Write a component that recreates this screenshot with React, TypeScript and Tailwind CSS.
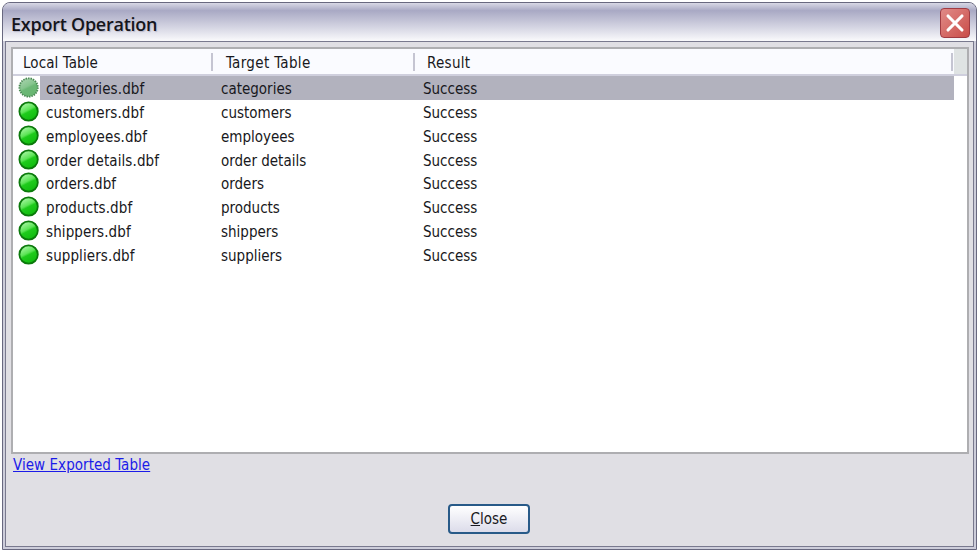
const names = ['categories', 'customers', 'employees', 'order details', 'orders', 'products', 'shippers', 'suppliers'];

function StatusIcon({ selected }: { selected: boolean }) {
  const id = selected ? 'ball-selected' : 'ball';
  return (
    <svg className="h-[22px] w-[22px] shrink-0" viewBox="0 0 22 22">
      <defs>
        <linearGradient id={id} x1="0.25" y1="0.1" x2="0.65" y2="0.9">
          <stop offset="0" stopColor={selected ? '#a0cfa6' : '#a0f59c'} />
          <stop offset="0.42" stopColor={selected ? '#86c58e' : '#5ce456'} />
          <stop offset="0.55" stopColor={selected ? '#6cb876' : '#1fcb1c'} />
          <stop offset="1" stopColor={selected ? '#68b672' : '#12bd10'} />
        </linearGradient>
      </defs>
      <circle cx="10.6" cy="10.5" r="9.2" fill={`url(#${id})`} stroke={selected ? '#4b8a55' : '#0b7a0b'} strokeWidth="1.8" strokeDasharray={selected ? '1.5 1' : undefined} />
    </svg>
  );
}

export default function App() {
  return (
    <div className="h-[552px] w-[979px] bg-white pt-[2px] pl-[2px] font-['DejaVu_Sans_Condensed','DejaVu_Sans',sans-serif] text-[15px] text-[#181820] [font-stretch:condensed]">
      <div className="flex h-[548px] w-[975px] flex-col overflow-hidden rounded-t-[8px] border border-[#68687f] bg-[#cdcdda]">
        <header className="flex h-[38px] shrink-0 items-center justify-between bg-linear-to-b from-[#d8d8e5] via-[#a9a9c4] via-20% to-[#fafafc] pr-[6px] pl-[8px]">
          <h1 className="pt-[3px] font-['Open_Sans',sans-serif] text-[18px] leading-[24px] font-semibold tracking-[-0.25px] text-[#15151c] [font-stretch:normal] [text-shadow:1px_1px_1px_#b8b8ca]">Export Operation</h1>
          <button className="mt-px flex h-[30px] w-[30px] items-center justify-center rounded-[4px] border border-[#a03b42] bg-linear-to-br from-[#e08a88] to-[#c94c49]">
            <svg className="h-[20px] w-[20px]" viewBox="0 0 20 20" stroke="#fff" strokeWidth="3.1" strokeLinecap="round">
              <path d="M3 3 17 17M17 3 3 17" />
            </svg>
          </button>
        </header>
        <main className="mx-[2px] mb-[2px] flex flex-1 flex-col border border-[#79798e] bg-[#e0dfe4] px-[5px] pt-[5px]">
          <section className="h-[407px] w-[958px] border-2 border-[#aeaeb1] bg-white">
            <div className="flex h-[27px] border-b-2 border-[#cfcfdd] bg-[#fafbff] leading-[28px]">
              <div className="flex w-[200px] items-start justify-between pl-[10px]"><span className="tracking-[0.1px]">Local Table</span><i className="mt-[4px] h-[18px] w-[2px] bg-[#c5c5d2]" /></div>
              <div className="flex w-[202px] items-start justify-between pl-[13px]"><span className="tracking-[0.35px]">Target Table</span><i className="mt-[4px] h-[18px] w-[2px] bg-[#c5c5d2]" /></div>
              <div className="flex flex-1 items-start justify-between pl-[12px]"><span className="tracking-[0.3px]">Result</span><i className="mt-[4px] mr-px h-[18px] w-[2px] bg-[#c5c5d2]" /></div>
              <div className="w-[13px] bg-[#dfe3e3]" />
            </div>
            {names.map((name, i) => (
              <div key={name} className="flex h-[23.86px] items-center pl-[5px] leading-[26px]">
                <StatusIcon selected={i === 0} />
                <div className={`flex h-full w-[914px] ${i === 0 ? 'bg-[#b2b2be]' : ''}`}>
                  <span className="w-[181px] pl-[6px] tracking-[0.1px]">{name}.dbf</span>
                  <span className="w-[202px]">{name}</span>
                  <span>Success</span>
                </div>
              </div>
            ))}
          </section>
          <a className="ml-[2px] w-fit text-[15px] leading-[22px] tracking-[0.05px] text-[#1b1be8] underline">View Exported Table</a>
          <button className="mt-[28px] ml-[437px] h-[30px] w-[82px] rounded-[4px] border-2 border-[#285a88] bg-linear-to-b from-white to-[#dcdcea]"><u>C</u>lose</button>
        </main>
      </div>
    </div>
  );
}
